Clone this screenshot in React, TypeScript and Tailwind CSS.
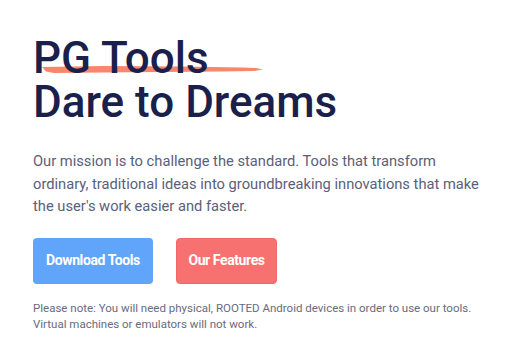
export default function App() {
  return (
    <div className="min-h-screen bg-white pl-[33px] pt-[36px] font-['Roboto',sans-serif]">
      <h1 className="text-[44px] font-medium leading-[44px] text-[#1b1f4b]">
        <span className="relative inline-block">
          <svg
            className="absolute left-[9px] top-[29px] h-[9px] w-[221px]"
            viewBox="0 0 221 9"
            preserveAspectRatio="none"
          >
            <path
              d="M0 2 L60 1 L140 1.5 L200 2.5 L214 3 L221 4.5 L212 6 L180 6.5 L120 7 L60 7.5 L12 8 L4 6.5 Z"
              fill="#f7876b"
            />
          </svg>
          <span className="relative">PG Tools</span>
        </span>
        <br />
        Dare to Dreams
      </h1>
      <p className="mt-[26px] max-w-[460px] text-[14.7px] leading-[22.5px] text-[#5b6079]">
        Our mission is to challenge the standard. Tools that transform
        <br />
        ordinary, traditional ideas into groundbreaking innovations that make
        <br />
        the user's work easier and faster.
      </p>
      <div className="mt-[20px] flex gap-[23px]">
        <button className="h-[46px] w-[120px] rounded-[4px] bg-[#60a5fa] text-[14px] font-bold tracking-[-0.4px] text-white">
          Download Tools
        </button>
        <button className="h-[46px] w-[101px] rounded-[4px] border border-[#f26767] bg-[#f87171] text-[14px] font-bold tracking-[-0.4px] text-white">
          Our Features
        </button>
      </div>
      <p className="mt-[16px] text-[11.5px] leading-[16.5px] text-[#676b80]">
        Please note: You will need physical, ROOTED Android devices in order to use our tools.
        <br />
        Virtual machines or emulators will not work.
      </p>
    </div>
  );
}
